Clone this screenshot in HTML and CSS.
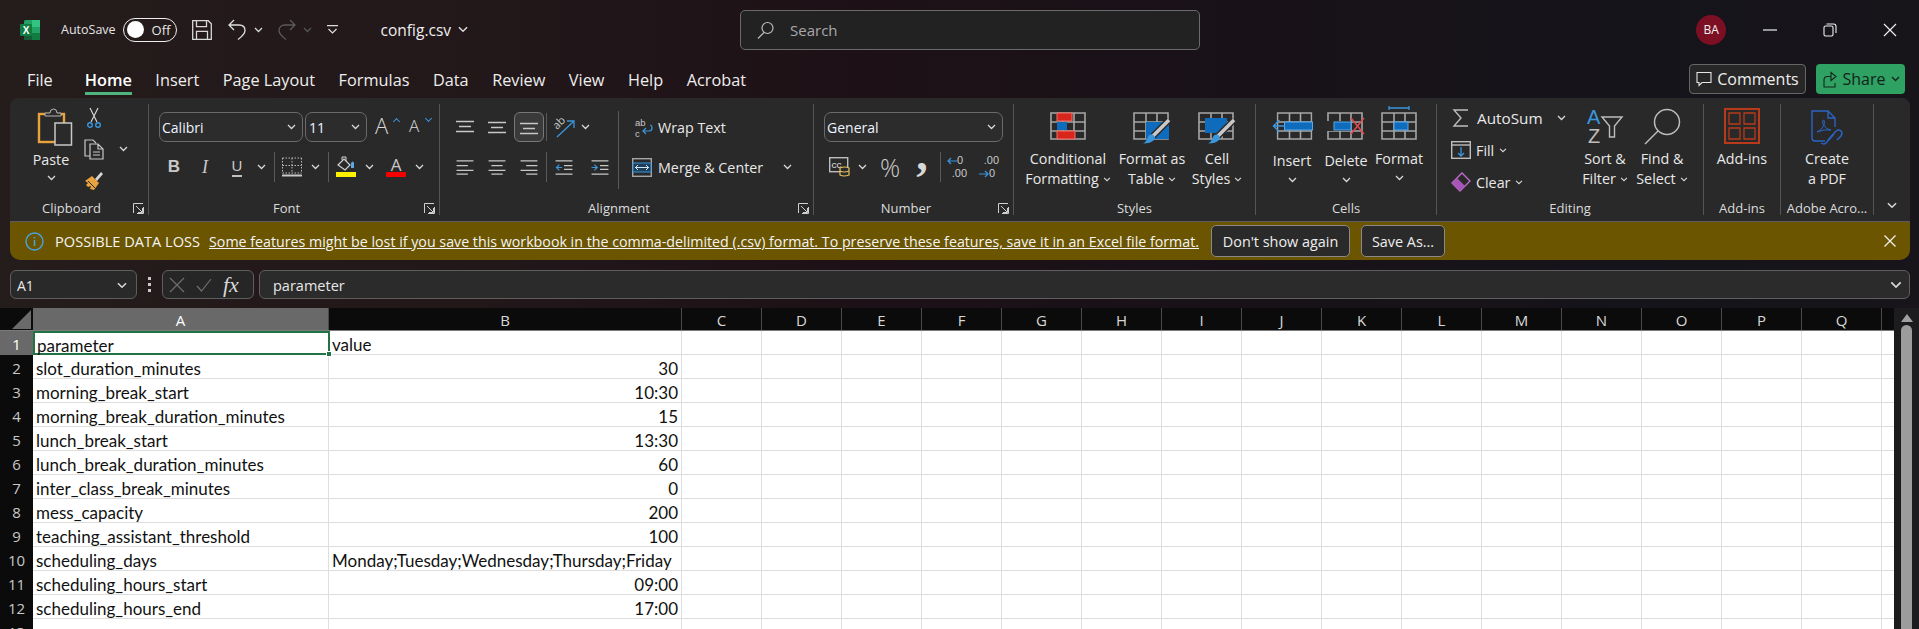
FILE: index.html
```html
<!DOCTYPE html>
<html lang="en">
<head>
  <meta charset="UTF-8" />
  <title>config.csv - Excel</title>
  <link rel="stylesheet" href="styles.css">
</head>
<body>
  <svg class="sprite" aria-hidden="true">
    <symbol id="chev" viewBox="0 0 9 6"><path d="M1 1l3.5 3.5L8 1" fill="none" stroke="currentColor" stroke-width="1.3"/></symbol>
    <symbol id="launch" viewBox="0 0 11 11"><path d="M.5 10V.5H10M3 3l6 6M5 9.5h4.5V5M10.5 4v6.5H4" fill="none" stroke="#cfcfcf"/></symbol>
    <symbol id="grid" viewBox="0 0 36 28"><path d="M1 1h34v26H1zM13 1v26M24 1v26M1 10h34M1 19h34" fill="none" stroke="#a6a6a6" stroke-width="1.6"/></symbol>
    <symbol id="brush" viewBox="0 0 38 32"><path d="M36 8 20 24" stroke="#2a2a2a" stroke-width="6.500" fill="none"/><path d="M36 8 20 24" stroke="#c9c9c9" stroke-width="3.500" fill="none"/><path d="M10 31.500c5 0 9-1 11-3.500 2-2.500 0-6-3-5.500-3 .5-3 3-4 5-1 1.500-2 3-4 4z" fill="#3a96dd"/></symbol>
  </svg>

  <div class="window">
    <header class="titlebar">
      <svg class="xl-logo" width="20" height="20" viewBox="0 0 20 20"><rect x="4" width="16" height="20" rx="1.500" fill="#21a366"/><rect x="12" y="0" width="8" height="7" fill="#33c481"/><rect x="12" y="13" width="8" height="7" fill="#107c41"/><rect x="4" y="13" width="8" height="7" fill="#185c37"/><rect y="4" width="12" height="12" rx="1" fill="#107c41"/><text x="6" y="13.500" text-anchor="middle" class="xl-x">X</text></svg>
      <span class="autosave">AutoSave</span>
      <span class="toggle"><i></i><b>Off</b></span>
      <svg class="q-save" width="20" height="20" viewBox="0 0 20 20"><path d="M.7.7h15.500l3.100 3.100v15.500H.7zM4.500.7v6h10v-6M4.500 19.300v-8h11v8" fill="none" stroke="#d8d8d8" stroke-width="1.300"/></svg>
      <svg class="q-undo" width="19" height="21" viewBox="0 0 19 21"><path d="M6 1 1 6l5 5M1 6h10c4 0 6 2.500 6 5.500 0 2.500-3 6-7 9" fill="none" stroke="#dedede" stroke-width="1.300"/></svg>
      <svg class="q-chev" width="9" height="6"><use href="#chev"/></svg>
      <svg class="q-redo" width="19" height="21" viewBox="0 0 19 21"><path d="M13 1l5 5-5 5M18 6H8C4 6 2 8.500 2 11.500c0 2.500 3 6 7 9" fill="none" stroke="#5c5a5c" stroke-width="1.300"/></svg>
      <svg class="q-chev dim" width="9" height="6"><use href="#chev"/></svg>
      <svg class="q-more" width="11" height="10" viewBox="0 0 11 10"><path d="M0 .7h11M1.500 4l4 4 4-4" fill="none" stroke="#dedede" stroke-width="1.200"/></svg>
      <span class="filename">config.csv</span>
      <svg class="file-chev" width="12" height="7" viewBox="0 0 9 6"><use href="#chev"/></svg>
      <div class="search">
        <svg width="18" height="18" viewBox="0 0 18 18"><circle cx="10.500" cy="7" r="5.500" fill="none" stroke="#bdbdbd" stroke-width="1.200"/><path d="M7 11.500 1 17.500" stroke="#bdbdbd" stroke-width="1.200"/></svg>
        <span>Search</span>
      </div>
      <div class="avatar">BA</div>
      <div class="winctl">
        <svg width="14" height="14" viewBox="0 0 14 14"><path d="M0 7h14" stroke="#eee" stroke-width="1.200"/></svg>
        <svg width="14" height="14" viewBox="0 0 14 14"><path d="M1 4.500q0-1.500 1.500-1.500h6q1.500 0 1.500 1.500v7q0 1.500-1.500 1.500h-6q-1.500 0-1.500-1.500zM3.500 1h7q2.500 0 2.500 2.500V10" fill="none" stroke="#eee" stroke-width="1.100"/></svg>
        <svg width="14" height="14" viewBox="0 0 14 14"><path d="M1 1l12 12M13 1 1 13" stroke="#eee" stroke-width="1.200"/></svg>
      </div>
    </header>

    <nav class="tabs">
      <a class="file">File</a><a class="active">Home</a><a>Insert</a><a>Page Layout</a><a>Formulas</a><a>Data</a><a>Review</a><a>View</a><a>Help</a><a>Acrobat</a>
      <button class="comments"><svg width="16" height="16" viewBox="0 0 16 16"><path d="M1 1.500h14v10H6l-3 3v-3H1z" fill="none" stroke="#e6e6e6" stroke-width="1.100"/></svg>Comments</button>
      <button class="share"><svg width="16" height="17" viewBox="0 0 16 17"><path d="M9 5.500H5.500Q2 5.500 2 9v7h11v-4M9 1.500l5 4-5 4z" fill="none" stroke="#14261b" stroke-width="1.100"/></svg>Share<svg width="9" height="6"><use href="#chev"/></svg></button>
    </nav>

    <section class="ribbon">
      <div class="group g-clip">
        <div class="group-body clip-body">
          <div class="paste">
            <svg class="paste-icon" width="34" height="38" viewBox="0 0 34 38"><rect x="1" y="6" width="25" height="28" fill="none" stroke="#e8a33d" stroke-width="2.400"/><path d="M7 8V5h5q0-4 3.500-4T19 5h4v3z" fill="#2a2a2a" stroke="#b5b5b5" stroke-width="1"/><rect x="17" y="15" width="16.500" height="22" fill="#2a2a2a" stroke="#c8c8c8" stroke-width="1.500"/></svg>
            <span>Paste</span>
            <svg class="chev-paste" width="9" height="6"><use href="#chev"/></svg>
          </div>
          <div class="clip-tools">
            <svg width="14" height="20" viewBox="0 0 14 20"><path d="M3 0l7 14M11 0 4 14" stroke="#d0d0d0" stroke-width="1.200"/><circle cx="3" cy="17" r="2.300" fill="none" stroke="#3a96dd" stroke-width="1.400"/><circle cx="11" cy="17" r="2.300" fill="none" stroke="#3a96dd" stroke-width="1.400"/></svg>
            <span></span>
            <svg width="20" height="20" viewBox="0 0 20 20"><path d="M6 17H1V1h8l3 3" fill="none" stroke="#c8c8c8" stroke-width="1.200"/><path d="M6 5h8l5 5v10H6zM14 5v5h5M9 13h7M9 16h7" fill="#2a2a2a" stroke="#c8c8c8" stroke-width="1.200"/></svg>
            <svg width="9" height="6"><use href="#chev"/></svg>
            <svg width="20" height="20" viewBox="0 0 20 20"><path d="M1 10l7-5 7 7-5 7-4-1 1-3-3 1-2-2 2-2z" fill="#e8a33d"/><path d="M11 8l6-7 2 2-6 7z" fill="#d6d6d6"/><path d="M4 10l7 7" stroke="#2a2a2a"/></svg>
          </div>
        </div>
        <div class="group-foot"><span class="group-label">Clipboard</span><svg class="launcher" width="11" height="11"><use href="#launch"/></svg></div>
      </div>

      <div class="group g-font">
        <div class="group-body font-body">
          <div class="font-top">
            <div class="combo c-name"><span class="combo-text">Calibri</span><svg width="9" height="6"><use href="#chev"/></svg></div>
            <div class="combo c-size"><span class="combo-text">11</span><svg width="9" height="6"><use href="#chev"/></svg></div>
            <span class="grow-a">A<i class="up"></i></span>
            <span class="grow-a small">A<i class="down"></i></span>
          </div>
          <div class="font-tools">
            <b class="t-b">B</b><i class="t-i">I</i><u class="t-u">U</u>
            <svg width="9" height="6"><use href="#chev"/></svg>
            <span class="vsep"></span>
            <svg width="20" height="20" viewBox="0 0 20 20"><path d="M.5 1h19M.5 1v15M19.500 1v15M10 1v15M.5 8.500h19M.5 16h19" fill="none" stroke="#bdbdbd" stroke-dasharray="1.500 1.500"/><path d="M0 18.500h20" stroke="#c8c8c8" stroke-width="2"/></svg>
            <svg width="9" height="6"><use href="#chev"/></svg>
            <span class="vsep"></span>
            <span class="paint">
              <svg width="20" height="15" viewBox="0 0 20 15"><path d="M2 8l6-6 6 6-5 5z" fill="none" stroke="#d4d4d4" stroke-width="1.200"/><path d="M6 3V0h4v4" fill="none" stroke="#d4d4d4"/><path d="M15 6q2-3 3 0v5h-3z" fill="#5aa9e6"/></svg>
              <i class="bar yellow"></i>
            </span>
            <svg width="9" height="6"><use href="#chev"/></svg>
            <span class="paint"><span class="color-a">A</span><i class="bar red"></i></span>
            <svg width="9" height="6"><use href="#chev"/></svg>
          </div>
        </div>
        <div class="group-foot"><span class="group-label">Font</span><svg class="launcher" width="11" height="11"><use href="#launch"/></svg></div>
      </div>

      <div class="group g-align">
        <div class="group-body align-body">
          <div class="align-icons">
            <svg class="al" viewBox="0 0 18 14"><path d="M0 1h18M3 6h12M0 11h18" stroke="#c8c8c8" stroke-width="1.300"/></svg>
            <svg class="al" viewBox="0 0 18 14"><path d="M0 2h18M3 7h12M0 12h18" stroke="#c8c8c8" stroke-width="1.300"/></svg>
            <span class="al-on"><svg class="al" viewBox="0 0 18 14"><path d="M0 3h18M3 8h12M0 13h18" stroke="#c8c8c8" stroke-width="1.300"/></svg></span>
            <span class="vsep short"></span>
            <svg width="21" height="21" viewBox="0 0 21 21"><text x="0" y="10" class="ab" transform="rotate(-45 5 8)">ab</text><path d="M3 20 19 5M13 4h7v7" fill="none" stroke="#3a96dd" stroke-width="1.300"/></svg>
            <svg class="left" width="9" height="6"><use href="#chev"/></svg>
            <svg class="al" viewBox="0 0 18 16"><path d="M0 1h18M0 6h12M0 11h18M0 15h12" stroke="#c8c8c8" stroke-width="1.300"/></svg>
            <svg class="al" viewBox="0 0 18 16"><path d="M0 1h18M3 6h12M0 11h18M3 15h12" stroke="#c8c8c8" stroke-width="1.300"/></svg>
            <svg class="al" viewBox="0 0 18 16"><path d="M0 1h18M6 6h12M0 11h18M6 15h12" stroke="#c8c8c8" stroke-width="1.300"/></svg>
            <span class="vsep"></span>
            <svg class="al" viewBox="0 0 18 16"><path d="M0 1h18M9 6h9M9 10h9M0 15h18" stroke="#c8c8c8" stroke-width="1.300"/><path d="M7 8H1M4 5 1 8l3 3" fill="none" stroke="#3a96dd" stroke-width="1.300"/></svg>
            <svg class="al" viewBox="0 0 18 16"><path d="M0 1h18M9 6h9M9 10h9M0 15h18" stroke="#c8c8c8" stroke-width="1.300"/><path d="M0 8h6M3 5l3 3-3 3" fill="none" stroke="#3a96dd" stroke-width="1.300"/></svg>
          </div>
          <span class="vsep tall"></span>
          <div class="wrap-col">
            <div class="wrap-row wrap-text">
              <svg width="18" height="18" viewBox="0 0 18 18"><text x="0" y="7.500" class="abc">ab</text><text x="0" y="18.500" class="abc">c</text><path d="M15 7q2 0 2 3t-3 3H8M11 10l-3 3 3 3" fill="none" stroke="#3a96dd" stroke-width="1.200"/></svg>
              <span>Wrap Text</span>
            </div>
            <div class="wrap-row">
              <svg width="20" height="19" viewBox="0 0 20 19"><rect x=".7" y=".7" width="18.600" height="17.600" fill="none" stroke="#a6a6a6" stroke-width="1.400"/><rect x="1" y="5" width="18" height="9" fill="#1f3e58" stroke="#3a96dd"/><path d="M3 9.500h14M6 7 3.500 9.500 6 12M14 7l2.500 2.500L14 12" fill="none" stroke="#cfe6f8"/></svg>
              <span>Merge &amp; Center</span>
              <svg class="push" width="9" height="6"><use href="#chev"/></svg>
            </div>
          </div>
        </div>
        <div class="group-foot"><span class="group-label">Alignment</span><svg class="launcher" width="11" height="11"><use href="#launch"/></svg></div>
      </div>

      <div class="group g-num">
        <div class="group-body num-body">
          <div class="combo c-general"><span class="combo-text">General</span><svg width="9" height="6"><use href="#chev"/></svg></div>
          <div class="num-tools">
            <svg width="21" height="20" viewBox="0 0 21 20"><rect x=".7" y=".7" width="18" height="14" fill="none" stroke="#bdbdbd" stroke-width="1.400"/><text x="2.500" y="11" class="cc">CC</text><path d="M11 11v7q4 2 9 0v-7q-4-2-9 0zM11 14q4 2 9 0" fill="#2a2a2a" stroke="#e8c060" stroke-width="1.200"/></svg>
            <svg width="9" height="6"><use href="#chev"/></svg>
            <span class="pct">%</span>
            <span class="comma">,</span>
            <span class="vsep"></span>
            <span class="dec"><i class="dec-arrow"><svg width="10" height="8" viewBox="0 0 10 8"><path d="M10 4H1M4 1 1 4l3 3" fill="none" stroke="#3a96dd" stroke-width="1.200"/></svg></i><em class="d-a">0</em><em class="d-b">.00</em></span>
            <span class="dec inc"><em class="d-b">.00</em><i class="dec-arrow"><svg width="10" height="8" viewBox="0 0 10 8"><path d="M0 4h9M6 1l3 3-3 3" fill="none" stroke="#3a96dd" stroke-width="1.200"/></svg></i><em class="d-a">0</em></span>
          </div>
        </div>
        <div class="group-foot"><span class="group-label">Number</span><svg class="launcher" width="11" height="11"><use href="#launch"/></svg></div>
      </div>

      <div class="group g-styles">
        <div class="group-body big-row styles-body">
          <div class="big">
            <svg class="big-icon" width="36" height="28" viewBox="0 0 36 28"><use href="#grid" width="36" height="28"/><path d="M7 1h15v8H7zM7 19h18v8H7z" fill="#d9261c" stroke="#f0736a"/><rect x="7" y="10" width="10" height="8" fill="#0f6cbd"/></svg>
            <span>Conditional</span>
            <span>Formatting <svg width="8" height="5"><use href="#chev"/></svg></span>
          </div>
          <div class="big">
            <svg class="big-icon" width="38" height="32" viewBox="0 0 38 32"><use href="#grid" width="36" height="28"/><rect x="13" y="10" width="23" height="17" fill="#0f6cbd"/><use href="#brush" width="38" height="32"/></svg>
            <span>Format as</span>
            <span>Table <svg width="8" height="5"><use href="#chev"/></svg></span>
          </div>
          <div class="big">
            <svg class="big-icon" width="38" height="32" viewBox="0 0 38 32"><use href="#grid" width="36" height="28"/><rect x="7" y="6" width="22" height="15" fill="#0f6cbd"/><use href="#brush" width="38" height="32"/></svg>
            <span>Cell</span>
            <span>Styles <svg width="8" height="5"><use href="#chev"/></svg></span>
          </div>
        </div>
        <div class="group-foot"><span class="group-label">Styles</span></div>
      </div>

      <div class="group g-cells">
        <div class="group-body big-row cells-body">
          <div class="big low">
            <svg class="big-icon" width="42" height="28" viewBox="-5 0 41 28"><use href="#grid" width="36" height="28"/><rect x="8" y="10" width="28" height="8" fill="#0f6cbd" stroke="#5aa9e6"/><path d="M8 14H-3M3 8l-6 6 6 6" fill="none" stroke="#3a96dd" stroke-width="1.500"/></svg>
            <span>Insert</span>
            <svg class="big-chev" width="9" height="6"><use href="#chev"/></svg>
          </div>
          <div class="big low">
            <svg class="big-icon" width="38" height="28" viewBox="0 0 38 28"><use href="#grid" width="36" height="28"/><rect x="0" y="9" width="24" height="10" fill="#2a2a2a"/><rect x="7" y="10" width="17" height="8" fill="#0f6cbd" stroke="#5aa9e6"/><path d="M24 6l13 16M37 6 24 22" stroke="#e5484d" stroke-width="1.500"/></svg>
            <span>Delete</span>
            <svg class="big-chev" width="9" height="6"><use href="#chev"/></svg>
          </div>
          <div class="big top-bar">
            <svg class="big-icon" width="36" height="35" viewBox="0 0 36 35"><path d="M8 1v4M28 1v4M8 3h20" stroke="#3a96dd" stroke-width="1.300"/><use href="#grid" y="7" width="36" height="28"/><rect x="13" y="17" width="14" height="8" fill="#0f6cbd" stroke="#5aa9e6"/></svg>
            <span>Format</span>
            <svg class="big-chev tight" width="9" height="6"><use href="#chev"/></svg>
          </div>
        </div>
        <div class="group-foot"><span class="group-label">Cells</span></div>
      </div>

      <div class="group g-edit">
        <div class="group-body big-row edit-body">
          <div class="edit-list">
            <div class="edit-row">
              <svg class="sigma" width="16" height="18" viewBox="0 0 16 18"><path d="M15 1H1l7 8-7 8h14" fill="none" stroke="#bdbdbd" stroke-width="1.400"/></svg>
              <span class="autosum">AutoSum</span>
              <svg class="push" width="9" height="6"><use href="#chev"/></svg>
            </div>
            <div class="edit-row">
              <svg width="20" height="18" viewBox="0 0 20 18"><rect x=".7" y=".7" width="18.600" height="16.600" fill="none" stroke="#bdbdbd" stroke-width="1.400"/><path d="M0 4h20" stroke="#bdbdbd" stroke-width="1.400"/><path d="M10 6v9M7 12l3 3 3-3" fill="none" stroke="#3a96dd" stroke-width="1.300"/></svg>
              <span>Fill</span>
              <svg width="8" height="5"><use href="#chev"/></svg>
            </div>
            <div class="edit-row">
              <svg width="20" height="20" viewBox="0 0 20 20"><path d="M1 11 11 1l8 8-10 10z" fill="none" stroke="#c06fd0" stroke-width="1.300"/><path d="M1 11l5-5 8 8-5 5z" fill="#a855b8"/></svg>
              <span>Clear</span>
              <svg width="8" height="5"><use href="#chev"/></svg>
            </div>
          </div>
          <div class="big tall-icon">
            <svg class="big-icon" width="36" height="37" viewBox="0 0 36 37"><text x="0" y="15.500" class="sort-a">A</text><text x="1" y="35" class="sort-z">Z</text><path d="M15 9h20l-7.500 9v11h-5V18z" fill="none" stroke="#bdbdbd" stroke-width="1.400"/></svg>
            <span>Sort &amp;</span>
            <span>Filter <svg width="8" height="5"><use href="#chev"/></svg></span>
          </div>
          <div class="big tall-icon">
            <svg class="big-icon" width="37" height="37" viewBox="0 0 37 37"><circle cx="23" cy="14" r="12.500" fill="none" stroke="#bdbdbd" stroke-width="1.500"/><path d="M14 23 1 36" stroke="#bdbdbd" stroke-width="1.500"/></svg>
            <span>Find &amp;</span>
            <span>Select <svg width="8" height="5"><use href="#chev"/></svg></span>
          </div>
        </div>
        <div class="group-foot"><span class="group-label">Editing</span></div>
      </div>

      <div class="group g-add">
        <div class="group-body big-row add-body">
          <div class="big tall-icon">
            <svg class="big-icon" width="36" height="37" viewBox="0 0 36 37"><rect x="1" y="1" width="34" height="34" fill="none" stroke="#b83a1a" stroke-width="2"/><path d="M5 5h11v11H5zM20 5h11v11H20zM5 20h11v11H5zM20 20h11v11H20z" fill="none" stroke="#b83a1a" stroke-width="1.300"/></svg>
            <span>Add-ins</span>
          </div>
        </div>
        <div class="group-foot"><span class="group-label">Add-ins</span></div>
      </div>

      <div class="group g-pdf">
        <div class="group-body big-row pdf-body">
          <div class="big">
            <svg class="big-icon" width="32" height="36" viewBox="0 0 32 36"><path d="M14 31H4q-3 0-3-3V1h16l7 7v9M17 1v7h7" fill="none" stroke="#2a64c4" stroke-width="1.400"/><path d="M6 22q5-2 7-7 1-5-.5-5T12 14q3 6 8 6-7-1-14 2z" fill="none" stroke="#2a64c4" stroke-width="1"/><path d="M17 30l8-9q3-2 5 0t0 5l-4 4M23 24l-8 9q-2 2-5 0" fill="none" stroke="#2a64c4" stroke-width="1.500"/></svg>
            <span>Create</span>
            <span>a PDF</span>
          </div>
        </div>
        <div class="group-foot"><span class="group-label">Adobe Acro...</span></div>
      </div>

      <div class="collapse"><svg width="12" height="7" viewBox="0 0 9 6"><use href="#chev"/></svg></div>
    </section>

    <section class="msgbar">
      <svg width="19" height="19" viewBox="0 0 19 19"><circle cx="9.500" cy="9.500" r="8.500" fill="none" stroke="#4aa3df" stroke-width="1.400"/><path d="M9.500 8v6M9.500 5v1.500" stroke="#4aa3df" stroke-width="1.500"/></svg>
      <strong>POSSIBLE DATA LOSS</strong>
      <a class="msg-link">Some features might be lost if you save this workbook in the comma-delimited (.csv) format. To preserve these features, save it in an Excel file format.</a>
      <button class="msg-btn">Don't show again</button>
      <button class="msg-btn">Save As...</button>
      <svg class="msg-close" width="12" height="12" viewBox="0 0 12 12"><path d="M.5.500l11 11M11.500.500l-11 11" stroke="#f0f0f0" stroke-width="1.300"/></svg>
    </section>

    <section class="formula">
      <div class="namebox"><span>A1</span><svg width="12" height="7" viewBox="0 0 9 6"><use href="#chev"/></svg></div>
      <div class="dots"><i></i><i></i><i></i></div>
      <div class="fx-btns">
        <svg width="16" height="16" viewBox="0 0 16 16"><path d="M1 1l14 14M15 1 1 15" stroke="#6e6e6e" stroke-width="1.200"/></svg>
        <svg width="16" height="14" viewBox="0 0 16 14"><path d="M1 8l4.500 5L15 1" fill="none" stroke="#6e6e6e" stroke-width="1.200"/></svg>
        <span class="fx">fx</span>
      </div>
      <div class="fx-input"><span>parameter</span><svg width="14" height="8" viewBox="0 0 9 6"><use href="#chev"/></svg></div>
    </section>

    <section class="sheet">
      <div class="sheet-main">
        <div class="col-heads">
          <div class="corner"><i></i></div>
          <div class="ch a on">A</div><div class="ch b">B</div><div class="ch">C</div><div class="ch">D</div><div class="ch">E</div><div class="ch">F</div><div class="ch">G</div><div class="ch">H</div><div class="ch">I</div><div class="ch">J</div><div class="ch">K</div><div class="ch">L</div><div class="ch">M</div><div class="ch">N</div><div class="ch">O</div><div class="ch">P</div><div class="ch">Q</div>
        </div>
        <div class="row"><div class="rh on">1</div><div class="cell a sel">parameter<i class="handle"></i></div><div class="cell b">value</div><div class="rest"></div></div>
        <div class="row"><div class="rh">2</div><div class="cell a">slot_duration_minutes</div><div class="cell b num">30</div><div class="rest"></div></div>
        <div class="row"><div class="rh">3</div><div class="cell a">morning_break_start</div><div class="cell b num">10:30</div><div class="rest"></div></div>
        <div class="row"><div class="rh">4</div><div class="cell a">morning_break_duration_minutes</div><div class="cell b num">15</div><div class="rest"></div></div>
        <div class="row"><div class="rh">5</div><div class="cell a">lunch_break_start</div><div class="cell b num">13:30</div><div class="rest"></div></div>
        <div class="row"><div class="rh">6</div><div class="cell a">lunch_break_duration_minutes</div><div class="cell b num">60</div><div class="rest"></div></div>
        <div class="row"><div class="rh">7</div><div class="cell a">inter_class_break_minutes</div><div class="cell b num">0</div><div class="rest"></div></div>
        <div class="row"><div class="rh">8</div><div class="cell a">mess_capacity</div><div class="cell b num">200</div><div class="rest"></div></div>
        <div class="row"><div class="rh">9</div><div class="cell a">teaching_assistant_threshold</div><div class="cell b num">100</div><div class="rest"></div></div>
        <div class="row"><div class="rh">10</div><div class="cell a">scheduling_days</div><div class="cell b">Monday;Tuesday;Wednesday;Thursday;Friday</div><div class="rest"></div></div>
        <div class="row"><div class="rh">11</div><div class="cell a">scheduling_hours_start</div><div class="cell b num">09:00</div><div class="rest"></div></div>
        <div class="row"><div class="rh">12</div><div class="cell a">scheduling_hours_end</div><div class="cell b num">17:00</div><div class="rest"></div></div>
        <div class="row"><div class="rh">13</div><div class="cell a"></div><div class="cell b"></div><div class="rest"></div></div>
      </div>
      <div class="vscroll">
        <svg width="12" height="8" viewBox="0 0 12 8"><path d="M6 0l6 8H0z" fill="#a0a0a0"/></svg>
        <div class="thumb"></div>
      </div>
    </section>
  </div>
</body>
</html>
```

FILE: styles.css
```css
* { box-sizing: border-box; }
html, body { margin: 0; height: 100%; overflow: hidden; }
body { font-family: "Open Sans", sans-serif; font-size: 14px; color: #e8e8e8; background: #1c1a1c; }
svg { display: block; flex: none; overflow: visible; color: #d8d8d8; }
button { font-family: inherit; color: inherit; }
i, em { font-style: normal; }
.sprite { width: 0; height: 0; position: absolute; }

.window { width: 1919px; height: 629px; display: flex; flex-direction: column; overflow: hidden; background: linear-gradient(90deg, #251c1c 0, #221719 25%, #1d1117 45%, #181218 65%, #15141a 85%, #17151a 100%); }

/* title bar */
.titlebar { height: 59px; flex: none; display: flex; align-items: center; padding-left: 20px; }
.xl-x { font: bold 10px "Liberation Sans", sans-serif; fill: #fff; }
.autosave { margin-left: 21px; font-size: 12.500px; color: #e4e4e4; }
.toggle { margin-left: 7px; width: 54px; height: 24px; border: 1px solid #eee; border-radius: 12px; display: flex; align-items: center; padding-left: 3px; }
.toggle i { width: 17px; height: 17px; border-radius: 50%; background: #fff; }
.toggle b { margin-left: 8px; font-weight: 400; font-size: 13px; }
.q-save { margin-left: 15px; }
.q-undo { margin-left: 16px; }
.q-chev { margin-left: 7px; }
.q-chev.dim { color: #555; }
.q-redo { margin-left: 14px; }
.q-more { margin-left: 15px; }
.filename { margin-left: 43px; font-size: 15.500px; color: #eee; }
.file-chev { margin-left: 6px; }
.search { margin-left: 271px; width: 460px; height: 40px; background: #232223; border: 1px solid #6a6a6a; border-radius: 5px; display: flex; align-items: center; gap: 15px; padding-left: 16px; font-size: 15px; color: #a8a8a8; }
.avatar { margin-left: 496px; width: 30px; height: 30px; border-radius: 50%; background: #7c0f24; color: #f2f2f2; font-size: 12px; display: flex; align-items: center; justify-content: center; }
.winctl { margin-left: 37px; display: flex; gap: 46px; }

/* tabs */
.tabs { height: 39px; flex: none; display: flex; align-items: flex-start; padding-left: 27px; font-size: 16.300px; color: #eee; }
.tabs a { margin-right: 23.500px; height: 36px; padding-top: 10px; line-height: 22px; }
.tabs a.file { margin-right: 32px; }
.tabs a.active { font-weight: 600; border-bottom: 3px solid #4fb47e; color: #fff; }
.comments, .share { height: 30px; border-radius: 4px; display: flex; align-items: center; font-size: 16px; margin-top: 5px; padding: 0; }
.comments { margin-left: auto; width: 117px; background: #272727; border: 1px solid #666; gap: 5px; justify-content: center; color: #eee; }
.share { margin-left: 10px; margin-right: 14px; width: 89px; background: #2fa162; border: 0; color: #12231a; gap: 5px; justify-content: center; }
.share svg { color: #12231a; }

/* ribbon */
.ribbon { height: 124px; flex: none; margin: 0 9px 0 10px; background: #292929; border-radius: 8px 8px 0 0; border-bottom: 1px solid #5c5c5c; display: flex; padding-top: 6px; align-items: flex-start; font-size: 14.300px; color: #e8e8e8; }
.group { height: 111px; border-right: 1px solid #555; display: flex; flex-direction: column; flex: none; }
.group-body { height: 96px; }
.group-foot { height: 15px; display: flex; align-items: center; padding-top: 2px; }
.group-label { flex: 1; text-align: center; font-size: 13px; line-height: 13px; color: #dcdcdc; white-space: nowrap; }
.launcher { margin-right: 4px; width: 11px; }
.g-clip { width: 139px; }
.g-font { width: 291px; }
.g-align { width: 374px; }
.g-num { width: 200px; }
.g-styles { width: 242px; }
.g-cells { width: 181px; }
.g-edit { width: 267px; }
.g-add { width: 77px; }
.g-pdf { width: 93px; }
.collapse { flex: 1; height: 105px; display: flex; align-items: flex-end; justify-content: center; }

.vsep { display: block; width: 1px; height: 30px; background: #5a5a5a; justify-self: center; }
.vsep.short { height: 28px; }
.vsep.tall { height: 78px; margin-top: 7px; flex: none; }

/* clipboard */
.clip-body { display: flex; padding-left: 17px; }
.paste { width: 48px; display: flex; flex-direction: column; align-items: center; padding-top: 4px; }
.paste-icon { margin-left: 7px; }
.paste span { margin-top: 4px; line-height: 20px; }
.chev-paste { margin-top: 5px; }
.clip-tools { display: grid; grid-template-columns: 38px 20px; grid-template-rows: 27px 36px 28px; align-items: center; justify-items: center; }

/* combos */
.combo { height: 30px; border: 1px solid #6a6a6a; border-radius: 7px; display: flex; align-items: center; justify-content: space-between; padding: 0 6px 0 2px; background: #2c2c2c; }
.combo-text { font-size: 14px; color: #eef4ff; }

/* font */
.font-body { padding: 8px 0 0 10px; }
.font-top { display: flex; align-items: center; }
.c-name { width: 144px; margin-right: 2px; }
.c-size { width: 62px; padding-left: 3px; }
.grow-a { margin-left: 8px; font-size: 22px; font-weight: 300; line-height: 26px; height: 30px; color: #d8d8d8; width: 26px; position: relative; }
.grow-a.small { margin-left: 8px; font-size: 17px; line-height: 28px; }
.grow-a i { position: absolute; top: 7px; right: 2px; width: 5px; height: 5px; border: solid #3a96dd; border-width: 1px 0 0 1px; transform: rotate(45deg); }
.grow-a i.down { transform: rotate(225deg); top: 4px; right: 4px; }
.font-tools { margin-top: 10px; height: 30px; display: grid; grid-template-columns: 30px 32px 32px 16px 10px 26px 20px 6px 29px 18px 36px 10px; align-items: center; justify-items: center; }
.t-b, .t-i, .t-u { font-family: "Liberation Sans", sans-serif; font-size: 17px; color: #c8c8c8; }
.t-i { font-family: "Liberation Serif", serif; font-style: italic; font-size: 18px; }
.t-u { text-decoration: none; border-bottom: 2px solid #c0c0c0; line-height: 18px; font-size: 15px; }
.paint { display: flex; flex-direction: column; align-items: center; width: 20px; }
.bar { width: 20px; height: 5px; display: block; }
.yellow { background: #ffef00; }
.red { background: #f50000; }
.color-a { font-size: 17px; line-height: 15px; color: #c8c8c8; }

/* alignment */
.align-body { display: flex; padding-left: 9px; }
.align-icons { padding-top: 8px; width: 169px; display: grid; grid-template-columns: 32px 32px 32px 2px 34px 37px; grid-template-rows: 30px 30px; row-gap: 10px; align-items: center; justify-items: center; }
.al { width: 18px; height: 15px; }
.al-on { width: 30px; height: 30px; border: 1px solid #777; border-radius: 6px; background: #3a3a3a; display: flex; align-items: center; justify-content: center; }
.left { justify-self: start; }
.ab { font: 11px "Open Sans", sans-serif; fill: #c8c8c8; }
.abc { font: 9.500px "Liberation Sans", sans-serif; fill: #c8c8c8; }
.wrap-col { margin-left: 13px; width: 161px; padding-top: 8px; }
.wrap-row { height: 30px; display: flex; align-items: center; gap: 6px; margin-bottom: 10px; }
.wrap-text { padding-left: 3px; gap: 5px; }
.push { margin-left: auto; margin-right: 1px; }

/* number */
.num-body { padding: 8px 0 0 10px; }
.c-general { width: 179px; }
.num-tools { margin-top: 10px; height: 30px; display: grid; grid-template-columns: 31px 14px 42px 22px 14px 20px 32px; align-items: center; justify-items: center; }
.cc { font: bold 7px "Liberation Sans", sans-serif; fill: #c8c8c8; }
.pct { font-size: 25px; font-weight: 300; line-height: 30px; color: #c8c8c8; }
.comma { font: bold 46px/30px "Liberation Serif", serif; color: #d8d8d8; margin-top: -25px; }
.dec { width: 20px; height: 26px; display: grid; grid-template-columns: 10px 10px; grid-template-rows: 13px 13px; font: 11px/13px "Liberation Sans", sans-serif; color: #c8c8c8; }
.dec-arrow { display: flex; align-items: center; }
.dec .d-b { grid-column: 1 / 3; text-align: right; }
.inc { justify-self: end; }
.d-a { text-align: left; }

/* big stacked buttons */
.big-row { display: flex; }
.big { display: flex; flex-direction: column; align-items: center; white-space: nowrap; line-height: 20px; padding-top: 8px; }
.big-icon { height: 28px; margin-bottom: 9px; }
.big > span { display: flex; align-items: center; gap: 4px; }
.big.low .big-icon { margin-bottom: 11px; }
.big-chev { margin-top: 6px; }
.big.top-bar { padding-top: 1px; }
.big.top-bar .big-icon { height: 35px; margin-bottom: 9px; }
.big.tall-icon { padding-top: 4px; }
.tall-icon .big-icon { margin-bottom: 4px; height: 37px; }
.styles-body { padding-left: 14px; }
.styles-body .big:nth-child(1) { width: 80px; }
.styles-body .big:nth-child(2) { width: 88px; }
.styles-body .big:nth-child(3) { width: 42px; }
.styles-body .big:nth-child(n+2) .big-icon { height: 32px; margin-bottom: 5px; }
.cells-body { padding-left: 9px; }
.cells-body .big:nth-child(1) { width: 54px; }
.cells-body .big:nth-child(2) { width: 54px; }
.cells-body .big:nth-child(3) { width: 52px; }

/* editing */
.edit-body { padding-left: 14px; }
.edit-list { width: 125px; display: grid; grid-template-rows: 28px 36px 28px; }
.edit-row { display: flex; align-items: center; gap: 5px; width: 116px; }
.edit-row .sigma { margin-left: 2px; margin-right: 3px; }
.autosum { font-size: 15.300px; }
.edit-body .big:nth-child(2) { width: 58px; }
.edit-body .big:nth-child(3) { width: 56px; }
.sort-a { font: 20px "Liberation Sans", sans-serif; fill: #3a96dd; }
.sort-z { font: 20px "Liberation Sans", sans-serif; fill: #bdbdbd; }
.add-body, .pdf-body { justify-content: center; }
.pdf-body .big { padding-top: 6px; }
.pdf-body .big-icon { height: 36px; margin-bottom: 3px; }

/* message bar */
.msgbar { height: 38px; flex: none; margin: 0 9px 0 10px; background: #6b5500; border-radius: 0 0 10px 10px; display: flex; align-items: center; padding-left: 15px; font-size: 14.240px; color: #f4f4f4; }
.msgbar strong { font-weight: 400; margin-left: 11px; font-size: 14.600px; }
.msg-link { margin-left: 9px; text-decoration: underline; white-space: nowrap; width: 988px; flex: none; }
.msg-btn { height: 32px; background: #2a2a2a; border: 1px solid #8a8a8a; border-radius: 5px; font-size: 14.400px; color: #eee; padding: 0; width: 139px; margin-left: 14px; }
.msg-btn + .msg-btn { width: 84px; margin-left: 11px; }
.msg-close { margin-left: auto; margin-right: 14px; }

/* formula bar */
.formula { height: 29px; margin: 10px 9px 9px 10px; flex: none; display: flex; align-items: stretch; }
.namebox { width: 127px; background: #292929; border: 1px solid #5e5e5e; border-radius: 6px; display: flex; align-items: center; justify-content: space-between; padding: 1px 8px 0 6px; font-size: 14px; }
.dots { width: 25px; display: flex; flex-direction: column; align-items: center; justify-content: center; gap: 3px; }
.dots i { width: 3px; height: 3px; background: #c8c8c8; }
.fx-btns { width: 92px; background: #262626; border: 1px solid #5e5e5e; border-radius: 6px; display: flex; align-items: center; padding: 0 6px; gap: 11px; }
.fx { font: italic 22px/24px "Liberation Serif", serif; color: #d8d8d8; }
.fx-input { margin-left: 5px; flex: 1; background: #2b2b2b; border: 1px solid #5e5e5e; border-radius: 6px; display: flex; align-items: center; justify-content: space-between; padding: 1px 6px 0 13px; font-size: 14.500px; }

/* sheet */
.sheet { flex: 1; display: flex; overflow: hidden; background: #1c1b1d; }
.sheet-main { width: 1894px; flex: none; overflow: hidden; }
.col-heads { height: 23px; display: flex; background: #0b0b0b; border-bottom: 1px solid #7a7a7a; overflow: hidden; }
.corner { width: 33px; flex: none; }
.corner i { display: block; width: 0; height: 0; margin: 2px 0 0 12px; border-style: solid; border-width: 0 0 19px 19px; border-color: transparent transparent #6a6a6a transparent; }
.ch { width: 80px; flex: none; border-right: 1px solid #4a4a4a; text-align: center; font-size: 15px; line-height: 24px; color: #d8d8d8; }
.ch.a { width: 296px; }
.ch.b { width: 353px; }
.ch.on { background: #696969; color: #fff; }
.row { height: 24px; display: flex; background: #fff; }
.rh { width: 33px; flex: none; background: #0b0b0b; color: #c8c8c8; text-align: center; font-size: 15px; line-height: 26px; }
.rh.on { background: #696969; color: #fff; }
.cell { flex: none; border: solid #dedede; border-width: 0 1px 1px 0; color: #111; font-family: "Lato", sans-serif; font-size: 17px; line-height: 27px; padding: 0 3px; white-space: nowrap; position: relative; }
.cell.a { width: 296px; }
.cell.b { width: 353px; }
.cell.num { text-align: right; }
.cell.sel { border: 2px solid #217346; line-height: 25px; padding-left: 2px; width: 297px; margin-right: -1px; z-index: 1; }
.handle { position: absolute; right: -4px; bottom: -4px; width: 6px; height: 6px; background: #217346; border: 1px solid #fff; }
.rest { flex: 1; border-bottom: 1px solid #dedede; background: repeating-linear-gradient(90deg, transparent 0 79px, #dedede 79px 80px); }
.vscroll { flex: 1; display: flex; flex-direction: column; align-items: center; padding-top: 6px; }
.thumb { width: 11px; flex: 1; margin-top: 3px; background: #9c9c9c; border-radius: 6px 6px 0 0; }
```
